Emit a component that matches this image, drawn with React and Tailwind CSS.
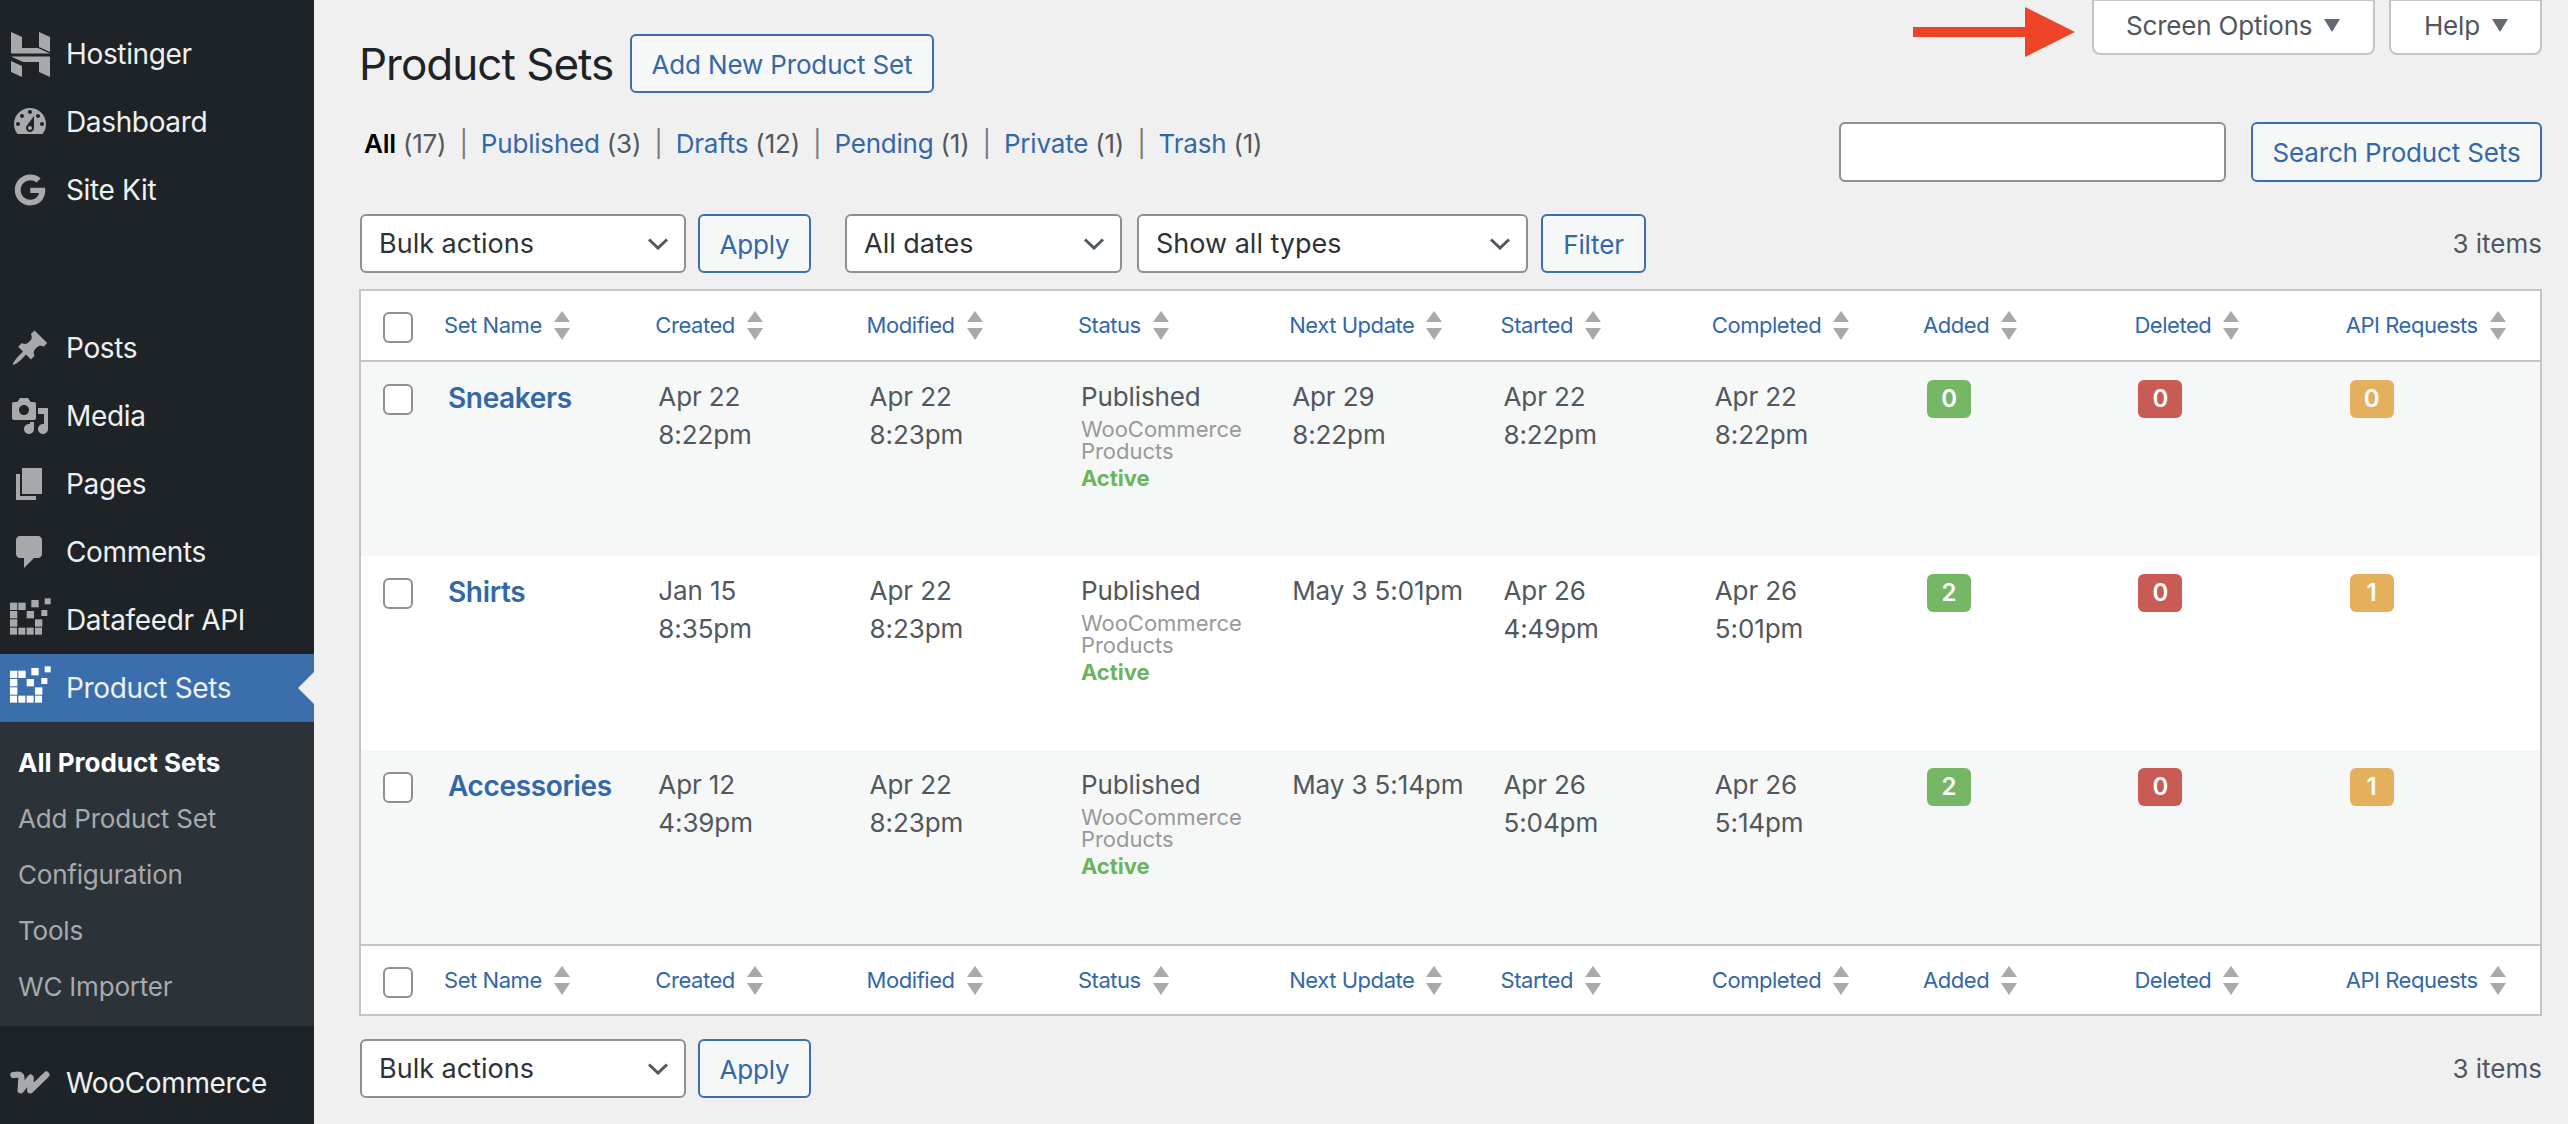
import React from 'react';
import { FaGoogle } from 'react-icons/fa';

// Dashicons paths for the core menu entries
const DASHBOARD = 'M3.76 16h12.48c1.1-1.37 1.76-3.11 1.76-5 0-4.42-3.58-8-8-8s-8 3.58-8 8c0 1.89.66 3.63 1.76 5zM10 4c.55 0 1 .45 1 1s-.45 1-1 1-1-.45-1-1 .45-1 1-1zM6 6c.55 0 1 .45 1 1s-.45 1-1 1-1-.45-1-1 .45-1 1-1zm8 0c.55 0 1 .45 1 1s-.45 1-1 1-1-.45-1-1 .45-1 1-1zm-5.37 5.55L12 7v6c0 1.1-.9 2-2 2s-2-.9-2-2c0-.57.24-1.08.63-1.45zM4 10c.55 0 1 .45 1 1s-.45 1-1 1-1-.45-1-1 .45-1 1-1zm12 0c.55 0 1 .45 1 1s-.45 1-1 1-1-.45-1-1 .45-1 1-1zm-5 3c0-.55-.45-1-1-1s-1 .45-1 1 .45 1 1 1 1-.45 1-1z';
const PIN = 'M10.44 3.02l1.82-1.82 6.36 6.35-1.83 1.82c-1.05-.68-2.48-.57-3.41.36l-.75.75c-.92.93-1.04 2.35-.35 3.41l-1.83 1.82-2.41-2.41-2.8 2.79c-.42.42-3.38 2.71-3.8 2.29s1.86-3.39 2.28-3.81l2.79-2.79L4.1 9.36l1.83-1.82c1.05.69 2.48.57 3.41-.36l.75-.75c.93-.92 1.04-2.35.35-3.41z';
const MEDIA = 'M13 11V4c0-.55-.45-1-1-1h-1.67L9 1H5L3.67 3H2c-.55 0-1 .45-1 1v7c0 .55.45 1 1 1h10c.55 0 1-.45 1-1zM7 4.5c1.38 0 2.5 1.12 2.5 2.5S8.38 9.5 7 9.5 4.5 8.38 4.5 7 5.62 4.5 7 4.5zM14 6h5v10.5c0 1.38-1.12 2.5-2.5 2.5S14 17.88 14 16.5s1.12-2.5 2.5-2.5c.17 0 .34.02.5.05V9h-3V6zm-4 8.05V13h2v3.5c0 1.38-1.12 2.5-2.5 2.5S7 17.88 7 16.5 8.12 14 9.5 14c.17 0 .34.02.5.05z';
const PAGE = 'M6 15V2h10v13H6zm-1 1h8v2H3V5h2v11z';
const COMMENT = 'M5 2h9c1.1 0 2 .9 2 2v7c0 1.1-.9 2-2 2h-2l-5 5v-5H5c-1.1 0-2-.9-2-2V4c0-1.1.9-2 2-2z';

function Dashicon({ d }) {
  return (
    <svg viewBox="0 0 20 20" className="w-[40px] h-[40px] fill-[#a7aaad]">
      <path d={d} fillRule="evenodd" />
    </svg>
  );
}

function HostingerIcon() {
  return (
    <svg viewBox="10 31 39 45" className="w-[39px] h-[45px] fill-[#a7aaad]">
      <polygon points="10,31 21,36 21,47 37,47 49,52.5 10,52.5" />
      <polygon points="38,31 49,36 49,51 38,46" />
      <polygon points="10,55.5 49,55.5 49,76 38,71 38,61 22,61" />
      <polygon points="10,60 21,65 21,76 10,71" />
    </svg>
  );
}

function DatafeedrIcon({ className }) {
  const squares = [
    [18, 35, 22], [43, 35, 22], [82, 27, 22], [122, 22, 18],
    [18, 60, 22], [68, 60, 22], [112, 57, 18],
    [18, 85, 22], [93, 85, 22],
    [18, 110, 21], [43, 110, 21], [68, 110, 21], [93, 110, 21],
  ];
  return (
    <svg viewBox="0 0 156 174" className={'w-[52px] h-[58px] ' + className}>
      {squares.map(([x, y, s]) => <rect key={x + '-' + y} x={x} y={y} width={s} height={s} />)}
    </svg>
  );
}

function WooIcon() {
  return (
    <svg viewBox="0 0 156 132" className="w-[52px] h-[44px]">
      <path d="M28 42 C 48 38, 54 42, 52 58 L 50 88 L 80 50 L 79 88 L 127 41" fill="none" stroke="#a7aaad" strokeWidth="19" strokeLinecap="round" strokeLinejoin="round" />
    </svg>
  );
}

function MenuItem({ icon, label, active, className = '' }) {
  return (
    <div className={'relative flex items-center h-[68px] ' + (active ? 'bg-[#3a6ead] ' : '') + className}>
      <div className="w-[60px] h-[68px] flex items-center justify-center shrink-0">{icon}</div>
      <span className="ml-[6px] text-[28px] tracking-[-0.35px] text-[#f0f0f1]">{label}</span>
      {active && (
        <svg viewBox="0 0 16 32" className="absolute right-0 top-[18px] w-[16px] h-[32px] fill-[#f0f0f1]">
          <polygon points="16,0 0,16 16,32" />
        </svg>
      )}
    </div>
  );
}

function Sidebar() {
  return (
    <aside className="w-[314px] shrink-0 h-[1124px] bg-[#1d2327] pt-[20px] overflow-hidden">
      <MenuItem icon={<HostingerIcon />} label="Hostinger" />
      <MenuItem icon={<Dashicon d={DASHBOARD} />} label="Dashboard" />
      <MenuItem icon={<FaGoogle className="w-[32px] h-[32px] text-[#a7aaad]" />} label="Site Kit" />
      <div className="h-[90px]" />
      <MenuItem icon={<Dashicon d={PIN} />} label="Posts" />
      <MenuItem icon={<Dashicon d={MEDIA} />} label="Media" />
      <MenuItem icon={<Dashicon d={PAGE} />} label="Pages" />
      <MenuItem icon={<Dashicon d={COMMENT} />} label="Comments" />
      <MenuItem icon={<DatafeedrIcon className="fill-[#a7aaad]" />} label="Datafeedr API" />
      <MenuItem icon={<DatafeedrIcon className="fill-white" />} label="Product Sets" active />
      <div className="bg-[#2c3338] h-[304px] pt-[12px] pl-[18px] text-[26px] tracking-[-0.2px] text-[#a7aaad]">
        <div className="h-[56px] flex items-center font-bold tracking-normal text-white">All Product Sets</div>
        <div className="h-[56px] flex items-center">Add Product Set</div>
        <div className="h-[56px] flex items-center">Configuration</div>
        <div className="h-[56px] flex items-center">Tools</div>
        <div className="h-[56px] flex items-center">WC Importer</div>
      </div>
      <MenuItem icon={<WooIcon />} label="WooCommerce" className="mt-[23px]" />
    </aside>
  );
}

function Button({ children, className = '' }) {
  return (
    <div className={'flex items-center justify-center h-[59px] pt-px border-2 border-[#3a6ead] rounded-[6px] bg-[#f6f7f7] text-[26px] tracking-[-0.15px] text-[#3367a8] ' + className}>
      {children}
    </div>
  );
}

function Select({ label, className = '' }) {
  return (
    <div className={'flex items-center justify-between h-[59px] pl-[17px] pr-[15px] border-2 border-[#8c8f94] rounded-[6px] bg-white text-[27px] text-[#2c3338] ' + className}>
      <span className="pt-[2px]">{label}</span>
      <svg viewBox="0 0 22 12" className="w-[22px] h-[12px]">
        <path d="M2 1.5 L11 10 L20 1.5" fill="none" stroke="#50575e" strokeWidth="3" />
      </svg>
    </div>
  );
}

function Checkbox({ className = '' }) {
  return <div className={'w-[30px] h-[31px] border-2 border-[#8c8f94] rounded-[6px] bg-white ' + className} />;
}

function Triangle() {
  return (
    <svg viewBox="0 0 16 13" className="w-[16px] h-[13px] fill-[#646970] shrink-0">
      <polygon points="0,0 16,0 8,13" />
    </svg>
  );
}

function ScreenTab({ label, className = '' }) {
  return (
    <div className={'flex items-center h-[56px] -mt-px pb-[3px] border-2 border-[#c3c4c7] rounded-b-[8px] bg-white text-[26px] tracking-[-0.2px] text-[#50575e] ' + className}>
      <span>{label}</span>
      <Triangle />
    </div>
  );
}

function SortArrows() {
  return (
    <svg viewBox="0 0 16 29" className="w-[16px] h-[29px] fill-[#a7aaad] shrink-0">
      <polygon points="8,0 16,11 0,11" />
      <polygon points="0,17 16,17 8,29" />
    </svg>
  );
}

const GRID = 'grid grid-cols-[69px_repeat(10,211.3px)]';
const COLUMNS = ['Set Name', 'Created', 'Modified', 'Status', 'Next Update', 'Started', 'Completed', 'Added', 'Deleted', 'API Requests'];

function HeaderRow({ className = '' }) {
  return (
    <div className={GRID + ' overflow-hidden ' + className}>
      <div className="pl-[22px] pt-[21px]"><Checkbox /></div>
      {COLUMNS.map((col) => (
        <div key={col} className="flex items-center gap-[12px] pl-[14px] text-[22px] tracking-[-0.45px] text-[#3367a8]">
          <span>{col}</span>
          <SortArrows />
        </div>
      ))}
    </div>
  );
}

function DateCell({ lines }) {
  return (
    <div className="pl-[17px] pt-[16px] text-[26px] leading-[38px] tracking-[-0.1px] text-[#50575e]">
      {lines.map((line) => <div key={line}>{line}</div>)}
    </div>
  );
}

function Badge({ value, color }) {
  return (
    <div className="pl-[18px] pt-[18px]">
      <div className={'flex items-center justify-center w-[44px] h-[38px] rounded-[6px] text-[24px] font-semibold text-white ' + color}>{value}</div>
    </div>
  );
}

const ROWS = [
  {
    name: 'Sneakers', created: ['Apr 22', '8:22pm'], modified: ['Apr 22', '8:23pm'], next: ['Apr 29', '8:22pm'],
    started: ['Apr 22', '8:22pm'], completed: ['Apr 22', '8:22pm'], added: 0, deleted: 0, api: 0, bg: 'bg-[#f6f7f7]',
  },
  {
    name: 'Shirts', created: ['Jan 15', '8:35pm'], modified: ['Apr 22', '8:23pm'], next: ['May 3 5:01pm'],
    started: ['Apr 26', '4:49pm'], completed: ['Apr 26', '5:01pm'], added: 2, deleted: 0, api: 1, bg: 'bg-white',
  },
  {
    name: 'Accessories', created: ['Apr 12', '4:39pm'], modified: ['Apr 22', '8:23pm'], next: ['May 3 5:14pm'],
    started: ['Apr 26', '5:04pm'], completed: ['Apr 26', '5:14pm'], added: 2, deleted: 0, api: 1, bg: 'bg-[#f6f7f7]',
  },
];

function Row({ row }) {
  return (
    <div className={GRID + ' h-[194px] overflow-hidden ' + row.bg}>
      <div className="pl-[22px] pt-[22px]"><Checkbox /></div>
      <div className="pl-[18px] pt-[17px] text-[28px] leading-[38px] tracking-[-0.35px] font-semibold text-[#3367a8]">{row.name}</div>
      <DateCell lines={row.created} />
      <DateCell lines={row.modified} />
      <div className="pl-[17px] pt-[16px]">
        <div className="text-[26px] leading-[38px] tracking-[-0.1px] text-[#50575e]">Published</div>
        <div className="text-[22px] leading-[22px] text-[#999999] mt-[2px]">WooCommerce<br />Products</div>
        <div className="text-[22px] leading-[22px] font-bold text-[#6cb35e] mt-[5px]">Active</div>
      </div>
      <DateCell lines={row.next} />
      <DateCell lines={row.started} />
      <DateCell lines={row.completed} />
      <Badge value={row.added} color="bg-[#75b765]" />
      <Badge value={row.deleted} color="bg-[#c85c54]" />
      <Badge value={row.api} color="bg-[#e4b05e]" />
    </div>
  );
}

function StatusLinks() {
  const links = [
    ['Published', 3], ['Drafts', 12], ['Pending', 1], ['Private', 1], ['Trash', 1],
  ];
  return (
    <div className="flex items-center h-[42px] pl-[5px] text-[26px] tracking-[-0.2px] text-[#50575e]">
      <span className="font-semibold text-black">All</span>
      <span className="ml-[7px]">(17)</span>
      {links.map(([label, count]) => (
        <React.Fragment key={label}>
          <span className="mx-[13px] text-[#787c82]">|</span>
          <span className="text-[#3367a8]">{label}</span>
          <span className="ml-[7px]">({count})</span>
        </React.Fragment>
      ))}
    </div>
  );
}

export default function App() {
  return (
    <div className="flex w-[2568px] h-[1124px] overflow-hidden bg-[#f0f0f1] font-[Inter,sans-serif]">
      <Sidebar />
      <main className="flex-1 min-w-0 pl-[45px] pr-[26px]">
        <div className="flex justify-between h-[122px]">
          <div className="flex items-center h-[59px] mt-[34px]">
            <h1 className="w-[253px] text-[44px] tracking-[-1px] whitespace-nowrap text-[#1d2327]">Product Sets</h1>
            <Button className="ml-[18px] w-[304px]">Add New Product Set</Button>
          </div>
          <div className="relative flex gap-[14px]">
            <svg viewBox="0 0 162 50" className="absolute -left-[179px] top-[7px] w-[162px] h-[50px] fill-[#ed4326]">
              <polygon points="0,20 112,20 112,0 162,25 112,50 112,30 0,30" />
            </svg>
            <ScreenTab label="Screen Options" className="w-[283px] pl-[32px] gap-[12px]" />
            <ScreenTab label="Help" className="w-[153px] pl-[33px] gap-[12px]" />
          </div>
        </div>

        <div className="flex justify-between h-[60px]">
          <StatusLinks />
          <div className="flex gap-[25px]">
            <div className="w-[387px] h-[60px] border-2 border-[#8c8f94] rounded-[6px] bg-white" />
            <Button className="w-[291px] h-[60px]">Search Product Sets</Button>
          </div>
        </div>

        <div className="flex items-center mt-[32px] h-[59px]">
          <Select label="Bulk actions" className="w-[326px] ml-px" />
          <Button className="w-[113px] ml-[12px]">Apply</Button>
          <Select label="All dates" className="w-[277px] ml-[34px]" />
          <Select label="Show all types" className="w-[391px] ml-[15px]" />
          <Button className="w-[105px] ml-[13px]">Filter</Button>
          <span className="ml-auto text-[26px] text-[#50575e]">3 items</span>
        </div>

        <div className="mt-[16px] border-2 border-[#c3c4c7] bg-white">
          <HeaderRow className="h-[71px] border-b-2 border-[#c3c4c7]" />
          {ROWS.map((row) => <Row key={row.name} row={row} />)}
          <HeaderRow className="h-[70px] border-t-2 border-[#c3c4c7]" />
        </div>

        <div className="flex items-center mt-[23px] h-[59px]">
          <Select label="Bulk actions" className="w-[326px] ml-px" />
          <Button className="w-[113px] ml-[12px]">Apply</Button>
          <span className="ml-auto text-[26px] text-[#50575e]">3 items</span>
        </div>
      </main>
    </div>
  );
}
